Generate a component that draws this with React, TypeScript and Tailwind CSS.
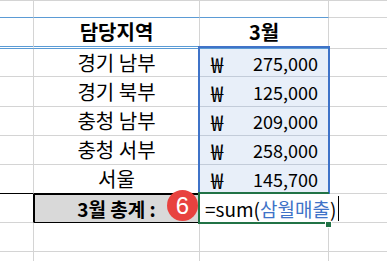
import React from 'react'

interface Row {
  region: string
  value: string
}

const rows: Row[] = [
  { region: '경기 남부', value: '275,000' },
  { region: '경기 북부', value: '125,000' },
  { region: '충청 남부', value: '209,000' },
  { region: '충청 서부', value: '258,000' },
  { region: '서울', value: '145,700' },
]

const heights = ['h-[28px]', 'h-[30px]', 'h-[29px]', 'h-[29px]', 'h-[29px]']

export default function App() {
  return (
    <div className="relative w-[387px] h-[261px] overflow-hidden bg-white border-t border-[#d4d4d4] font-['Noto_Sans_CJK_KR',sans-serif] text-[20px] leading-none text-black">
      {/* row 1 */}
      <div className="flex h-[17px]">
        <div className="w-[34px] border-r border-b border-r-[#d4d4d4] border-b-[#5b9bd5]" />
        <div className="w-[166px] border-r border-b border-r-[#d4d4d4] border-b-[#5b9bd5]" />
        <div className="w-[129px] border-r border-b border-r-[#d4d4d4] border-b-[#5b9bd5]" />
        <div className="flex-1 border-b border-[#d4d4d4]" />
      </div>

      {/* header */}
      <div className="flex h-[31px]">
        <div className="w-[34px] border-r border-r-[#d4d4d4] border-b-[3px] border-double border-b-[#5b9bd5]" />
        <div className="w-[166px] border-r border-r-[#d4d4d4] border-b-[3px] border-double border-b-[#5b9bd5] flex items-center justify-center font-bold">
          담당지역
        </div>
        <div className="w-[129px] border-r border-r-[#d4d4d4] border-b-[3px] border-double border-b-[#5b9bd5] flex items-center justify-center font-bold">
          3월
        </div>
        <div className="flex-1 border-b border-[#d4d4d4]" />
      </div>

      {/* data */}
      {rows.map((r, i) => (
        <div key={r.region} className={`flex ${heights[i]}`}>
          <div className={`w-[34px] border-r border-b border-[#d4d4d4] ${i === 4 ? 'border-b-black' : ''}`} />
          <div className={`w-[166px] border-r border-b border-[#d4d4d4] flex items-center justify-center ${i === 4 ? 'border-b-black' : ''}`}>
            {r.region}
          </div>
          <div className="w-[129px] border-r border-b border-[#c3ccd9] bg-[#e8eff9] flex items-center justify-between pl-[11px] pr-[10px]">
            <span className="text-[22px]">₩</span>
            <span className="text-[18px]">{r.value}</span>
          </div>
          <div className="flex-1 border-b border-[#d4d4d4]" />
        </div>
      ))}

      {/* total */}
      <div className="flex h-[29px]">
        <div className="w-[34px] border-r border-b border-[#d4d4d4] border-r-black" />
        <div className="w-[166px] border-t border-l border-b border-black bg-[#d9d9d9] flex items-center justify-center font-bold text-[19px] pr-[2px]">
          3월 총계 :
        </div>
        <div className="relative z-10 w-[129px] border-b border-b-[#d4d4d4] flex items-center text-[19px]">
          <span className="flex items-center whitespace-nowrap bg-white pl-[5px] pr-[3px] h-full">
            <span>=sum(</span>
            <span className="text-[#3f73c8]">삼월매출</span>
            <span>)</span>
            <span className="ml-[2px] w-px h-[25px] bg-black" />
          </span>
        </div>
        <div className="flex-1 border-b border-[#d4d4d4]" />
      </div>

      {[0, 1].map((k) => (
        <div key={k} className="flex h-[29px]">
          <div className="w-[34px] border-r border-b border-[#d4d4d4]" />
          <div className="w-[166px] border-r border-b border-[#d4d4d4]" />
          <div className="w-[129px] border-r border-b border-[#d4d4d4]" />
          <div className="flex-1 border-b border-[#d4d4d4]" />
        </div>
      ))}

      {/* reference highlight */}
      <div className="absolute left-[198px] top-[45px] w-[132px] h-[148px] border-2 border-[#3f73c8] z-20" />

      {/* active cell */}
      <div className="absolute left-[198px] top-[191px] w-[131px] h-[32px] border-2 border-r-0 border-[#217346] z-20" />
      <div className="absolute left-[325px] top-[220px] w-[7px] h-[7px] bg-[#217346] border border-white z-30" />

      {/* step badge */}
      <div className="absolute left-[167px] top-[189px] w-[31px] h-[31px] rounded-full bg-[#e8423f] z-30 flex items-center justify-center text-white text-[24px] font-['Liberation_Sans',sans-serif] leading-none">
        6
      </div>
    </div>
  )
}
